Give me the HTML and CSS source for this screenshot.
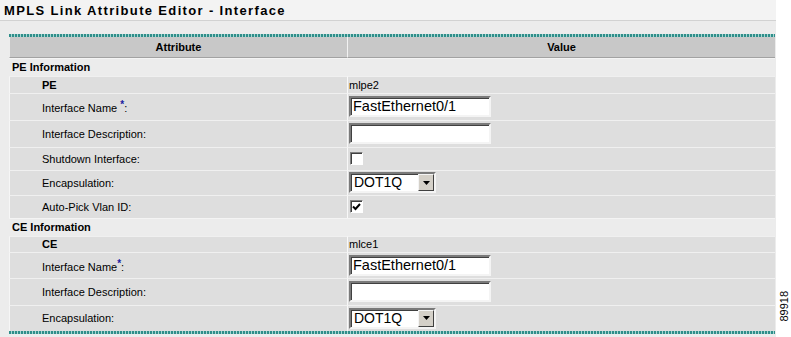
FILE: index.html
```html
<!DOCTYPE html>
<html>
<head>
<meta charset="utf-8">
<link rel="stylesheet" href="styles.css">
</head>
<body>
<div class="page">
  <div class="titlebar">MPLS Link Attribute Editor - Interface</div>
  <div class="content">
    <table class="grid">
      <thead>
        <tr><th class="c1">Attribute</th><th class="c2">Value</th></tr>
      </thead>
      <tbody>
        <tr class="sec h18"><td colspan="2">PE Information</td></tr>
        <tr class="item h17"><td class="lbl b">PE</td><td class="val">mlpe2</td></tr>
        <tr class="item h27"><td class="lbl">Interface Name <span class="req">*</span>:</td><td class="val"><span class="txt">FastEthernet0/1</span></td></tr>
        <tr class="item h27"><td class="lbl">Interface Description:</td><td class="val"><span class="txt"></span></td></tr>
        <tr class="item h23"><td class="lbl">Shutdown Interface:</td><td class="val"><span class="chk"></span></td></tr>
        <tr class="item h25"><td class="lbl">Encapsulation:</td><td class="val"><span class="sel"><span class="selv">DOT1Q</span><span class="selb"><svg width="7" height="4" viewBox="0 0 7 4"><path d="M0 0H7L3.5 4Z" fill="#000"/></svg></span></span></td></tr>
        <tr class="item h23"><td class="lbl">Auto-Pick Vlan ID:</td><td class="val"><span class="chk"><svg width="9" height="8" viewBox="0 0 9 8"><path d="M1 3.5L3.5 6L8 1" stroke="#000" stroke-width="2" fill="none"/></svg></span></td></tr>
        <tr class="sec h18"><td colspan="2">CE Information</td></tr>
        <tr class="item h16"><td class="lbl b">CE</td><td class="val">mlce1</td></tr>
        <tr class="item h26"><td class="lbl">Interface Name<span class="req">*</span>:</td><td class="val"><span class="txt">FastEthernet0/1</span></td></tr>
        <tr class="item h27"><td class="lbl">Interface Description:</td><td class="val"><span class="txt"></span></td></tr>
        <tr class="item h26"><td class="lbl">Encapsulation:</td><td class="val"><span class="sel"><span class="selv">DOT1Q</span><span class="selb"><svg width="7" height="4" viewBox="0 0 7 4"><path d="M0 0H7L3.5 4Z" fill="#000"/></svg></span></span></td></tr>
      </tbody>
    </table>
  </div>
  <div class="figno">89918</div>
</div>
</body>
</html>
```
FILE: styles.css
```css
html, body { margin: 0; padding: 0; background: #fff; }
body { font-family: "Liberation Sans", Arial, sans-serif; font-size: 11px; color: #000; }
.page { position: relative; width: 791px; height: 337px; overflow: hidden; }
.titlebar {
  width: 776px; height: 21px; box-sizing: border-box;
  background: #f3f3f3; border-bottom: 1px solid #d2d2d2;
  font-weight: bold; font-size: 13px; letter-spacing: 1.35px;
  padding: 3px 0 0 4px; line-height: 15px;
}
.content { width: 776px; height: 316px; background: #ececec; padding: 13px 0 0 9px; box-sizing: border-box; }
.grid {
  width: 766px; border-collapse: separate; border-spacing: 0;
  table-layout: fixed;
  border-style: solid; border-color: transparent; border-width: 3px 0;
  border-image: repeating-linear-gradient(90deg, #2f8e8a 0 2px, #a6d6d2 2px 3px) 3 0 / 3px 0;
}
.grid thead tr { height: 21px; }
.grid thead th {
  padding: 0; background: #c8c8c8; font-size: 11px; font-weight: bold;
  border-bottom: 1px solid #a2a2a2;
  height: 20px; text-align: center; vertical-align: middle;
}
.grid th.c1 { width: 337px; border-left: 1px solid #ececec; }
.grid th.c2 { border-left: 1px solid #f2f2f2; }
.grid td { padding: 0 0 1px 0; vertical-align: middle; }
.sec td { background: #ececec; font-weight: bold; padding-left: 3px; border-top: 1px solid #f4f4f4; }
.item td { background: #dedede; border-top: 1px solid #f0f0f0; }
.item td.lbl { padding-left: 32px; border-left: 1px solid #f6f6f6; }
.item td.val { padding-left: 1px; border-left: 1px solid #f8f8f8; }
.b { font-weight: bold; }
.h16 { height: 16px; } .h17 { height: 17px; } .h18 { height: 18px; } .h23 { height: 23px; }
.h25 { height: 25px; } .h26 { height: 26px; } .h27 { height: 27px; }
.req { color: #1a1aa0; font-weight: bold; font-size: 10px; vertical-align: 4px; }
.txt {
  display: block; width: 142px; height: 21px; box-sizing: border-box;
  background: #fff; border: 2px solid; border-color: #7a7a7a #f4f4f4 #f4f4f4 #7a7a7a;
  box-shadow: inset 1px 1px 0 #404040;
  font-size: 14.5px; line-height: 17px; padding-left: 2px;
}
.chk {
  display: flex; align-items: center; justify-content: center;
  width: 13px; height: 13px; margin-left: 1px; box-sizing: border-box;
  background: #fff; border: 1px solid; border-color: #808080 #fff #fff #808080;
  box-shadow: inset 1px 1px 0 #404040;
}
.sel {
  display: flex; width: 87px; height: 21px; box-sizing: border-box;
  background: #fff; border: 2px solid; border-color: #7a7a7a #f4f4f4 #f4f4f4 #7a7a7a;
  box-shadow: inset 1px 1px 0 #404040;
}
.selv { flex: 1; font-size: 14px; line-height: 17px; padding-left: 3px; }
.selb {
  width: 16px; display: flex; align-items: center; justify-content: center;
  background: #d4d0c8; border: 1px solid; border-color: #f4f4f4 #404040 #404040 #f4f4f4;
  box-sizing: border-box;
}
.figno {
  position: absolute; left: 779px; top: 291px;
  writing-mode: vertical-rl; transform: rotate(180deg);
  font-family: "Liberation Sans", Arial, sans-serif; font-size: 11px; line-height: 11px;
}
```
